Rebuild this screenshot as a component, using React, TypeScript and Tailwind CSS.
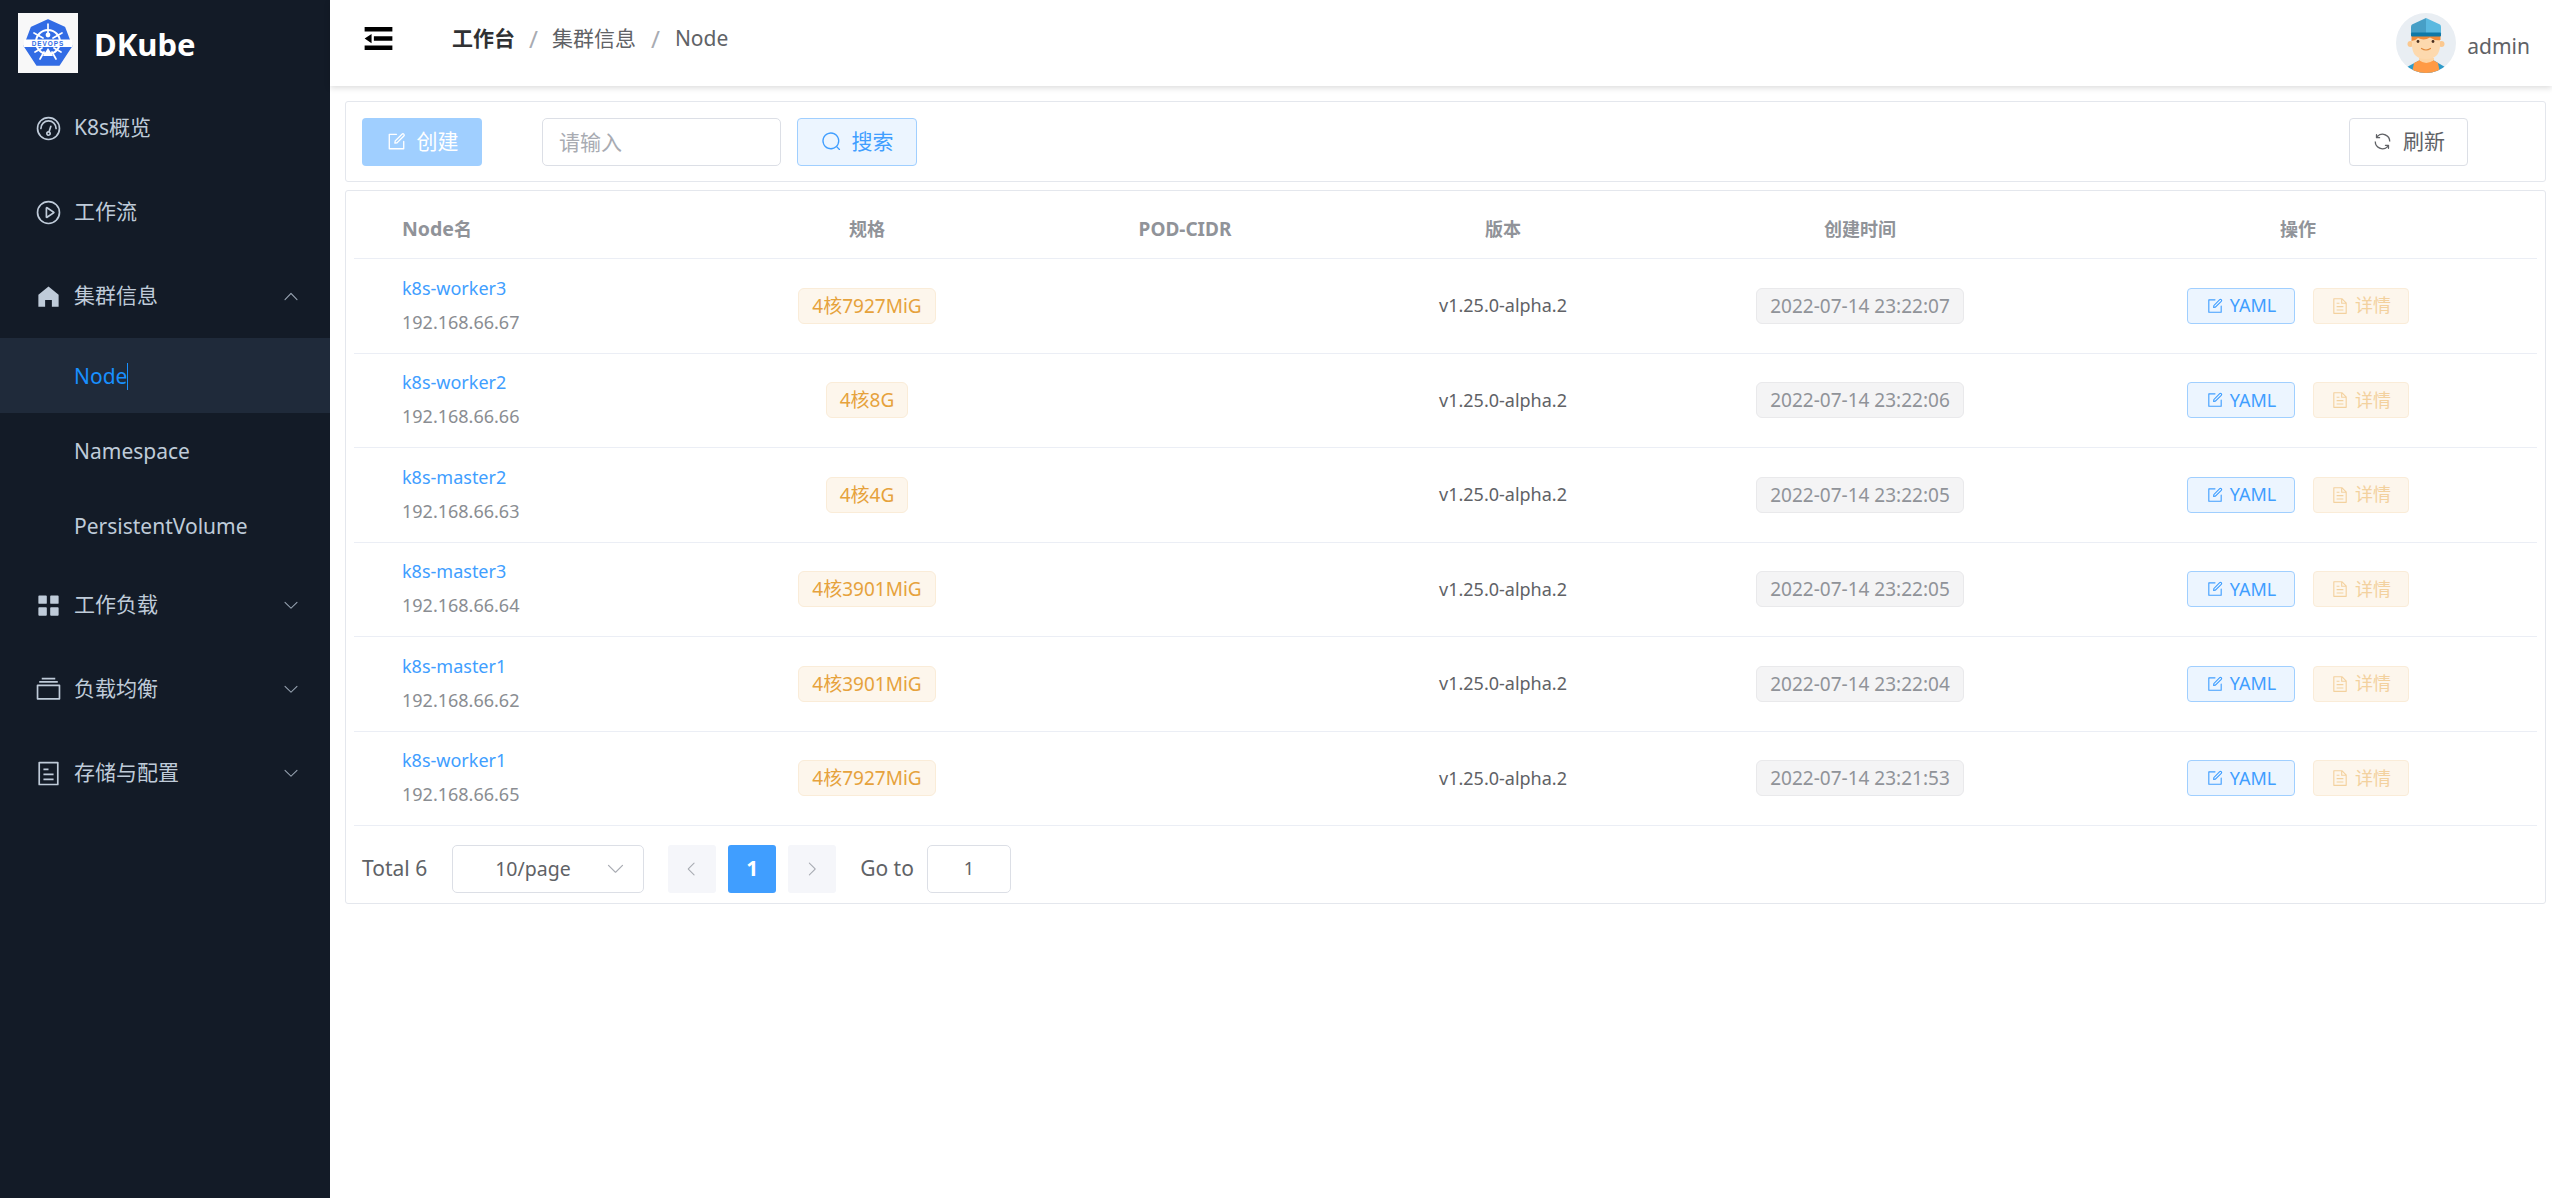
import type { ReactNode } from 'react'

type Node = {
    name: string
    ip: string
    spec: string
    created: string
}

const nodes: Node[] = [
    { name: 'k8s-worker3', ip: '192.168.66.67', spec: '4核7927MiG', created: '2022-07-14 23:22:07' },
    { name: 'k8s-worker2', ip: '192.168.66.66', spec: '4核8G', created: '2022-07-14 23:22:06' },
    { name: 'k8s-master2', ip: '192.168.66.63', spec: '4核4G', created: '2022-07-14 23:22:05' },
    { name: 'k8s-master3', ip: '192.168.66.64', spec: '4核3901MiG', created: '2022-07-14 23:22:05' },
    { name: 'k8s-master1', ip: '192.168.66.62', spec: '4核3901MiG', created: '2022-07-14 23:22:04' },
    { name: 'k8s-worker1', ip: '192.168.66.65', spec: '4核7927MiG', created: '2022-07-14 23:21:53' },
]

const paths = {
    odometer: 'M512 896a384 384 0 1 0 0-768 384 384 0 0 0 0 768zm0 64a448 448 0 1 1 0-896 448 448 0 0 1 0 896z M192 512a320 320 0 1 1 640 0 32 32 0 1 1-64 0 256 256 0 1 0-512 0 32 32 0 0 1-64 0z M570.432 627.84A96 96 0 1 1 509.568 608l60.992-187.776A32 32 0 1 1 631.424 440l-61.056 187.84zM502.08 734.464a32 32 0 1 0 19.84-60.928 32 32 0 0 0-19.84 60.928z',
    play: 'M512 64a448 448 0 1 1 0 896 448 448 0 0 1 0-896zm0 832a384 384 0 0 0 0-768 384 384 0 0 0 0 768zm-48-247.616L668.608 512 464 375.616v272.768zm10.624-342.656 249.472 166.336a48 48 0 0 1 0 79.872L474.624 718.272A48 48 0 0 1 400 678.336V345.6a48 48 0 0 1 74.624-39.936z',
    home: 'M512 128 128 447.936V896h255.936V640H640v256h255.936V447.936z',
    menu: 'M160 448a32 32 0 0 1-32-32V160.064a32 32 0 0 1 32-32h256a32 32 0 0 1 32 32V416a32 32 0 0 1-32 32H160zm448 0a32 32 0 0 1-32-32V160.064a32 32 0 0 1 32-32h255.936a32 32 0 0 1 32 32V416a32 32 0 0 1-32 32H608zM160 896a32 32 0 0 1-32-32V608a32 32 0 0 1 32-32h256a32 32 0 0 1 32 32v256a32 32 0 0 1-32 32H160zm448 0a32 32 0 0 1-32-32V608a32 32 0 0 1 32-32h255.936a32 32 0 0 1 32 32v256a32 32 0 0 1-32 32H608z',
    files: 'M128 384v448h768V384H128zm-32-64h832a32 32 0 0 1 32 32v512a32 32 0 0 1-32 32H96a32 32 0 0 1-32-32V352a32 32 0 0 1 32-32zM160 192h704v64H160zm96-128h512v64H256z',
    tickets: 'M192 128v768h640V128H192zm-32-64h704a32 32 0 0 1 32 32v832a32 32 0 0 1-32 32H160a32 32 0 0 1-32-32V96a32 32 0 0 1 32-32zm160 448h384v64H320v-64zm0-192h192v64H320v-64zm0 384h384v64H320v-64z',
    fold: 'M896 192H128v128h768V192zm0 256H384v128h512V448zm0 256H128v128h768V704zM320 384 128 512l192 128V384z',
    edit: 'M832 512a32 32 0 1 1 64 0v352a32 32 0 0 1-32 32H160a32 32 0 0 1-32-32V160a32 32 0 0 1 32-32h352a32 32 0 0 1 0 64H192v640h640V512z M469.952 554.24l52.8-7.552L847.104 222.4a32 32 0 1 0-45.248-45.248L477.44 501.44l-7.552 52.8zm422.4-422.4a96 96 0 0 1 0 135.808l-331.84 331.84a32 32 0 0 1-18.112 9.088L436.8 623.68a32 32 0 0 1-36.224-36.224l15.104-105.6a32 32 0 0 1 9.024-18.112l331.904-331.84a96 96 0 0 1 135.744 0z',
    search: 'm795.904 750.72 124.992 124.928a32 32 0 0 1-45.248 45.248L750.656 795.904a416 416 0 1 1 45.248-45.248zM480 832a352 352 0 1 0 0-704 352 352 0 0 0 0 704z',
    refresh: 'M771.776 794.88A384 384 0 0 1 128 512h64a320 320 0 0 0 555.712 216.448H654.72a32 32 0 1 1 0-64h149.056a32 32 0 0 1 32 32v148.928a32 32 0 1 1-64 0v-50.56zM276.288 295.616h92.992a32 32 0 0 1 0 64H220.16a32 32 0 0 1-32-32V178.56a32 32 0 0 1 64 0v50.56A384 384 0 0 1 896.128 512h-64a320 320 0 0 0-555.776-216.384z',
    document: 'M832 384H576V128H192v768h640V384zm-26.496-64L640 154.496V320h165.504zM160 64h480l256 256v608a32 32 0 0 1-32 32H160a32 32 0 0 1-32-32V96a32 32 0 0 1 32-32zm160 448h384v64H320v-64zm0-192h160v64H320v-64zm0 384h384v64H320v-64z',
    down: 'M831.872 340.864 512 652.672 192.128 340.864a30.592 30.592 0 0 0-42.752 0 29.12 29.12 0 0 0 0 41.6L489.664 714.24a32 32 0 0 0 44.672 0l340.288-331.712a29.12 29.12 0 0 0 0-41.728 30.592 30.592 0 0 0-42.752 0z',
    up: 'm488.832 344.32-339.84 356.672a32 32 0 0 0 0 44.16l.384.384a29.44 29.44 0 0 0 42.688 0l320-335.872 319.872 335.872a29.44 29.44 0 0 0 42.688 0l.384-.384a32 32 0 0 0 0-44.16L535.168 344.32a32 32 0 0 0-46.336 0z',
    left: 'M609.408 149.376 277.76 489.6a32 32 0 0 0 0 44.672l331.648 340.352a29.12 29.12 0 0 0 41.728 0 30.592 30.592 0 0 0 0-42.752L339.264 512l311.872-319.872a30.592 30.592 0 0 0 0-42.688 29.12 29.12 0 0 0-41.728-.064z',
    right: 'M340.864 149.312a30.592 30.592 0 0 0 0 42.752L652.736 512 340.864 831.872a30.592 30.592 0 0 0 0 42.752 29.12 29.12 0 0 0 41.728 0L714.24 534.336a32 32 0 0 0 0-44.672L382.592 149.376a29.12 29.12 0 0 0-41.728-.064z',
}

function Icon({ d, className }: { d: string; className: string }) {
    return (
        <svg viewBox="0 0 1024 1024" fill="currentColor" className={className}>
            <path d={d} />
        </svg>
    )
}

function Logo() {
    return (
        <div className="w-[60px] h-[60px] bg-[#f8f8f8] shrink-0">
            <svg viewBox="0 0 60 60" className="w-full h-full">
                <path d="M30 7 L46.5 14.5 L53.5 33 L41 52 L19 52 L6.5 33 L13.5 14.5 Z" fill="#326ce5" stroke="#326ce5" strokeWidth="1.6" strokeLinejoin="round" />
                <g stroke="#fff" strokeLinecap="round">
                    <circle cx="30" cy="29" r="12" fill="none" strokeWidth="2" />
                    <path d="M30 11 V22 M16 20 L25 25 M44 20 L35 25 M17 39 L24 35 M43 39 L36 35 M22 46 L26 39 M38 46 L34 39" strokeWidth="1.7" />
                </g>
                <circle cx="30" cy="22" r="2.4" fill="#fff" />
                <path d="M30 35 L35 43 H25 Z" fill="#fff" />
                <rect x="6" y="26.5" width="48" height="7.5" fill="#fff" />
                <text x="30" y="32.6" textAnchor="middle" fontSize="6.4" fontWeight="700" letterSpacing="1" fill="#326ce5" fontFamily="Liberation Sans, sans-serif">DEVOPS</text>
            </svg>
        </div>
    )
}

function Avatar() {
    return (
        <svg viewBox="0 0 60 60" className="w-[60px] h-[60px] shrink-0">
            <defs>
                <clipPath id="avatar-clip">
                    <circle cx="30" cy="30" r="30" />
                </clipPath>
            </defs>
            <g clipPath="url(#avatar-clip)">
                <rect width="60" height="60" fill="#e9eef3" />
                <path d="M10 60 L11 54 L24 47 H37 L49 54 L50 60 Z" fill="#2f9bc9" />
                <path d="M16 60 L18 50 L24 47 H37 L42 50 L44 60 Z" fill="#ff9a45" />
                <rect x="24" y="40" width="13" height="8" fill="#fbc88f" />
                <path d="M23 47 Q30 53 38 47 V45 H23 Z" fill="#fdd5a5" />
                <circle cx="14.5" cy="31" r="3" fill="#fbc88f" />
                <circle cx="45.5" cy="31" r="3" fill="#fbc88f" />
                <path d="M16 22 H44 V32 Q44 46 30 46 Q16 46 16 32 Z" fill="#fdd9ae" />
                <path d="M15.5 22 H44.5 V27 Q39 28 34 24.5 Q28 28 22 25 Q19 28 15.5 28 Z" fill="#f08b3a" />
                <path d="M30 5 L16 11.5 Q15 12 15 14 V20 H30 Z" fill="#479fc6" />
                <path d="M30 5 L44 11.5 Q45 12 45 14 V20 H30 Z" fill="#5ab9e0" />
                <rect x="15" y="19.5" width="30" height="4" rx="1" fill="#0f78a6" />
                <circle cx="22" cy="28.5" r="1.4" fill="#4a3020" />
                <circle cx="37" cy="28.5" r="1.4" fill="#4a3020" />
                <path d="M25.5 35.5 Q30 38.5 34.5 35.5" fill="none" stroke="#e08a3c" strokeWidth="1.2" strokeLinecap="round" />
            </g>
        </svg>
    )
}

function MenuItem({ icon, label, arrow }: { icon: string; label: string; arrow?: string }) {
    return (
        <div className="h-[84px] flex items-center pl-[35px] pr-[30px] text-[21px] text-[#bfcbd9]">
            <Icon d={icon} className="w-[27px] h-[27px] mr-[12px] shrink-0" />
            <span>{label}</span>
            {arrow && <Icon d={arrow} className="w-[18px] h-[18px] ml-auto text-[#97a3b1]" />}
        </div>
    )
}

function Sidebar() {
    return (
        <aside className="w-[330px] shrink-0 bg-[#131b27]">
            <div className="h-[86px] flex items-center pl-[18px]">
                <Logo />
                <span className="ml-[16px] pt-[2px] text-[31px] leading-none font-bold text-white">DKube</span>
            </div>
            <MenuItem icon={paths.odometer} label="K8s概览" />
            <MenuItem icon={paths.play} label="工作流" />
            <MenuItem icon={paths.home} label="集群信息" arrow={paths.up} />
            <div className="h-[75px] flex items-center pl-[74px] pt-[2px] text-[21px] bg-[#1f2a3a] text-[#1890ff]">
                Node
                <span className="inline-block w-px h-[27px] bg-[#1890ff]" />
            </div>
            <div className="h-[75px] flex items-center pl-[74px] pt-[2px] text-[21px] text-[#bfcbd9]">Namespace</div>
            <div className="h-[75px] flex items-center pl-[74px] pt-[2px] text-[21px] text-[#bfcbd9]">PersistentVolume</div>
            <MenuItem icon={paths.menu} label="工作负载" arrow={paths.down} />
            <MenuItem icon={paths.files} label="负载均衡" arrow={paths.down} />
            <MenuItem icon={paths.tickets} label="存储与配置" arrow={paths.down} />
        </aside>
    )
}

function Topbar() {
    return (
        <header className="h-[86px] shrink-0 flex items-center bg-white shadow-[0_2px_6px_rgba(0,0,0,0.14)] pl-[30px] pr-[22px]">
            <div className="flex items-center pb-[10px]">
                <Icon d={paths.fold} className="w-[37px] h-[37px] text-black" />
                <div className="ml-[55px] pt-[2px] flex items-center text-[21px] text-[#606266]">
                    <span className="font-bold text-[#303133]">工作台</span>
                    <span className="mx-[14px] text-[#a8abb2] text-[24px] leading-none">/</span>
                    <span>集群信息</span>
                    <span className="mx-[15px] text-[#a8abb2] text-[24px] leading-none">/</span>
                    <span>Node</span>
                </div>
            </div>
            <div className="ml-auto flex items-center">
                <Avatar />
                <span className="ml-[11px] text-[21px] text-[#606266] pt-[8px]">admin</span>
            </div>
        </header>
    )
}

function Toolbar() {
    return (
        <div className="h-[81px] flex items-center border border-[#e4e7ed] rounded-[3px] pl-[16px] pr-[77px]">
            <button className="w-[120px] h-[48px] flex items-center justify-center gap-[10px] rounded-[4px] bg-[#a0cfff] text-white text-[21px]">
                <Icon d={paths.edit} className="w-[21px] h-[21px]" />
                创建
            </button>
            <input
                placeholder="请输入"
                className="ml-[60px] w-[239px] h-[48px] px-[16px] border border-[#dcdfe6] rounded-[5px] text-[21px] placeholder:text-[#a8abb2] outline-none"
            />
            <button className="ml-[16px] w-[120px] h-[48px] flex items-center justify-center gap-[10px] rounded-[4px] bg-[#ecf5ff] border border-[#a0cfff] text-[#409eff] text-[21px]">
                <Icon d={paths.search} className="w-[21px] h-[21px]" />
                搜索
            </button>
            <button className="ml-auto w-[119px] h-[48px] flex items-center justify-center gap-[10px] rounded-[4px] bg-white border border-[#dcdfe6] text-[#606266] text-[21px]">
                <Icon d={paths.refresh} className="w-[21px] h-[21px]" />
                刷新
            </button>
        </div>
    )
}

function Tag({ tone, children }: { tone: 'warning' | 'gray'; children: ReactNode }) {
    const cls = tone === 'warning'
        ? 'bg-[#fdf6ec] border-[#faecd8] text-[#e6a23c]'
        : 'bg-[#f4f4f5] border-[#e9e9eb] text-[#909399]'
    return <span className={`inline-flex items-center h-[36px] px-[13px] rounded-[6px] border text-[19px] ${cls}`}>{children}</span>
}

const rowGrid = 'grid grid-cols-[355px_316px_320px_316px_398px_478px] items-center'

function NodeTable() {
    return (
        <div>
            <div className={`${rowGrid} h-[68px] pt-[9px] border-b border-[#ebeef5] text-[18px] font-bold text-[#909399]`}>
                <div className="pl-[48px]"><span className="text-[19.5px]">Node</span>名</div>
                <div className="text-center">规格</div>
                <div className="text-center text-[19px]">POD-CIDR</div>
                <div className="text-center">版本</div>
                <div className="text-center">创建时间</div>
                <div className="text-center">操作</div>
            </div>
            {nodes.map((node) => (
                <div key={node.name} className={`${rowGrid} h-[94.5px] border-b border-[#ebeef5] text-[18px] text-[#606266]`}>
                    <div className="pl-[48px] pb-[2px] flex flex-col gap-[8px] leading-[26px]">
                        <span className="text-[#409eff]">{node.name}</span>
                        <span className="text-[#8a8d92]">{node.ip}</span>
                    </div>
                    <div className="text-center"><Tag tone="warning">{node.spec}</Tag></div>
                    <div />
                    <div className="text-center">v1.25.0-alpha.2</div>
                    <div className="text-center"><Tag tone="gray">{node.created}</Tag></div>
                    <div className="flex justify-center gap-[18px]">
                        <button className="w-[108px] h-[36px] flex items-center justify-center gap-[6px] rounded-[4px] bg-[#ecf5ff] border border-[#a0cfff] text-[#409eff] text-[18px]">
                            <Icon d={paths.edit} className="w-[18px] h-[18px]" />
                            YAML
                        </button>
                        <button className="w-[96px] h-[36px] flex items-center justify-center gap-[6px] rounded-[4px] bg-[#fdf6ec] border border-[#faecd8] text-[#f3d19e] text-[18px]">
                            <Icon d={paths.document} className="w-[18px] h-[18px]" />
                            详情
                        </button>
                    </div>
                </div>
            ))}
        </div>
    )
}

function Pagination() {
    return (
        <div className="h-[77px] flex items-center pt-[8px] pl-[8px] text-[21px] text-[#606266]">
            <span>Total 6</span>
            <div className="ml-[25px] w-[192px] h-[48px] flex items-center border border-[#dcdfe6] rounded-[5px] pl-[42px] pr-[17px] text-[19.5px]">
                <span>10/page</span>
                <Icon d={paths.down} className="w-[21px] h-[21px] ml-auto text-[#a8abb2]" />
            </div>
            <div className="ml-[24px] w-[48px] h-[48px] flex items-center justify-center rounded-[3px] bg-[#f5f6fa] text-[#a8abb2]">
                <Icon d={paths.left} className="w-[18px] h-[18px]" />
            </div>
            <div className="ml-[12px] w-[48px] h-[48px] flex items-center justify-center rounded-[3px] bg-[#409eff] text-white font-bold">1</div>
            <div className="ml-[12px] w-[48px] h-[48px] flex items-center justify-center rounded-[3px] bg-[#f5f6fa] text-[#a8abb2]">
                <Icon d={paths.right} className="w-[18px] h-[18px]" />
            </div>
            <span className="ml-[24px]">Go to</span>
            <div className="ml-[13px] w-[84px] h-[48px] flex items-center justify-center border border-[#dcdfe6] rounded-[5px] text-[18px]">1</div>
        </div>
    )
}

export default function App() {
    return (
        <div className="h-screen flex overflow-hidden bg-white font-['Noto_Sans','Noto_Sans_CJK_SC',sans-serif]">
            <Sidebar />
            <main className="flex-1 min-w-0 flex flex-col">
                <Topbar />
                <div className="pt-[15px] pl-[15px] pr-[6px] flex flex-col gap-[8px]">
                    <Toolbar />
                    <div className="border border-[#e4e7ed] rounded-[3px] px-[8px]">
                        <NodeTable />
                        <Pagination />
                    </div>
                </div>
            </main>
        </div>
    )
}
